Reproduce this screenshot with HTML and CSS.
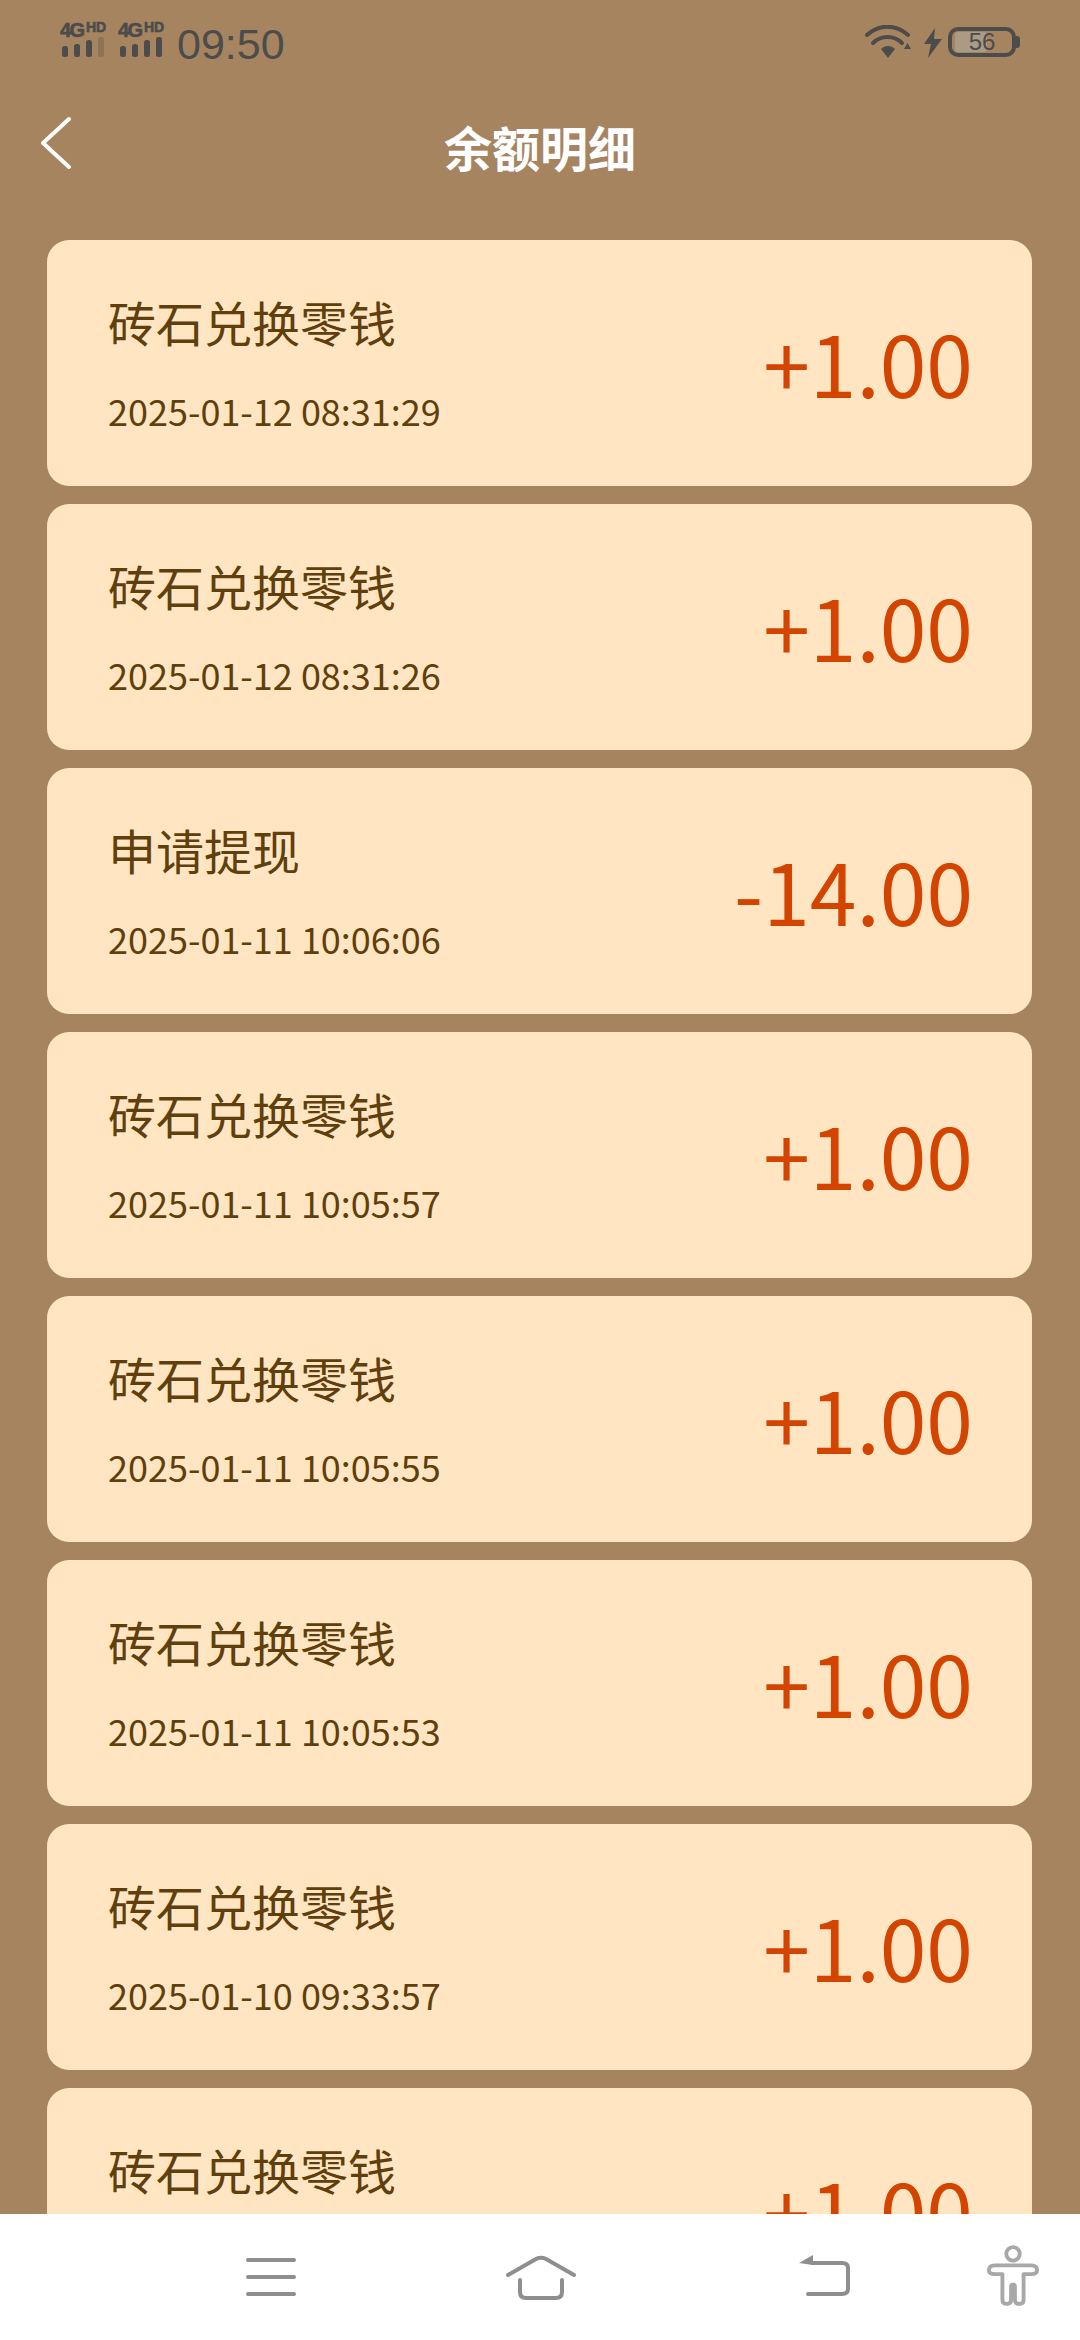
FILE: index.html

```html
<!DOCTYPE html>
<html lang="zh-CN">
<head>
  <meta charset="UTF-8" />
  <title>余额明细</title>
  <link rel="stylesheet" href="styles.css">
</head>
<body>
  <div class="page">
    <div class="status-bar">
      <svg class="signal" width="50" height="48" viewBox="0 0 50 48">
        <text x="0" y="23" class="net">4G</text><text x="26" y="18" class="hd">HD</text>
        <rect x="2" y="32" width="6" height="11" rx="2.500" fill="#4c4c4c"/>
        <rect x="14" y="30" width="6" height="13" rx="2.500" fill="#4c4c4c"/>
        <rect x="26" y="26" width="6" height="17" rx="2.500" fill="#4c4c4c"/>
        <rect x="38" y="23" width="6" height="20" rx="2.500" fill="#8c7355"/>
      </svg>
      <svg class="signal" width="50" height="48" viewBox="0 0 50 48">
        <text x="0" y="23" class="net">4G</text><text x="26" y="18" class="hd">HD</text>
        <rect x="2" y="32" width="6" height="11" rx="2.500" fill="#4c4c4c"/>
        <rect x="14" y="30" width="6" height="13" rx="2.500" fill="#4c4c4c"/>
        <rect x="26" y="26" width="6" height="17" rx="2.500" fill="#4c4c4c"/>
        <rect x="38" y="23" width="6" height="20" rx="2.500" fill="#4c4c4c"/>
      </svg>
      <span class="time">09:50</span>
      <div class="status-right">
        <svg width="48" height="36" viewBox="0 0 48 36" fill="none" stroke="#4c4c4c" stroke-width="4" stroke-linecap="round">
          <path d="M3 10C15 -1 32 -1 44 10"/>
          <path d="M9 18C17 10 30 10 38 18"/>
          <path d="M17 24L24 33L31 24C27 20 21 20 17 24Z" fill="#4c4c4c" stroke="none"/>
          <path d="M40 24L47 24L43.500 18Z" fill="#4c4c4c" stroke="none"/>
        </svg>
        <svg class="bolt" width="18" height="30" viewBox="0 0 18 30"><path d="M11 0L0 16H7L4 30L18 11H10Z" fill="#4c4c4c"/></svg>
        <div class="battery">
          <div class="battery-fill"></div>
          <span class="battery-num">56</span>
        </div>
        <div class="battery-nub"></div>
      </div>
    </div>

    <div class="header">
      <svg class="back" width="32" height="54" viewBox="0 0 32 54" fill="none" stroke="#fff" stroke-width="4" stroke-linecap="round" stroke-linejoin="round">
        <path d="M28 3L2 27L28 51"/>
      </svg>
      <h1>余额明细</h1>
    </div>

    <div class="list">
      <div class="card">
        <div class="info"><div class="name">砖石兑换零钱</div><div class="date">2025-01-12 08:31:29</div></div>
        <div class="amount">+1.00</div>
      </div>
      <div class="card">
        <div class="info"><div class="name">砖石兑换零钱</div><div class="date">2025-01-12 08:31:26</div></div>
        <div class="amount">+1.00</div>
      </div>
      <div class="card">
        <div class="info"><div class="name">申请提现</div><div class="date">2025-01-11 10:06:06</div></div>
        <div class="amount">-14.00</div>
      </div>
      <div class="card">
        <div class="info"><div class="name">砖石兑换零钱</div><div class="date">2025-01-11 10:05:57</div></div>
        <div class="amount">+1.00</div>
      </div>
      <div class="card">
        <div class="info"><div class="name">砖石兑换零钱</div><div class="date">2025-01-11 10:05:55</div></div>
        <div class="amount">+1.00</div>
      </div>
      <div class="card">
        <div class="info"><div class="name">砖石兑换零钱</div><div class="date">2025-01-11 10:05:53</div></div>
        <div class="amount">+1.00</div>
      </div>
      <div class="card">
        <div class="info"><div class="name">砖石兑换零钱</div><div class="date">2025-01-10 09:33:57</div></div>
        <div class="amount">+1.00</div>
      </div>
      <div class="card">
        <div class="info"><div class="name">砖石兑换零钱</div><div class="date">2025-01-10 09:33:55</div></div>
        <div class="amount">+1.00</div>
      </div>
    </div>

    <div class="nav">
      <svg class="nav-menu" width="50" height="40" viewBox="0 0 50 40" fill="none" stroke="#8e8e8e" stroke-width="4" stroke-linecap="round">
        <path d="M2 2H48M2 19H48M2 36H48"/>
      </svg>
      <svg class="nav-home" width="72" height="46" viewBox="0 0 72 46" fill="none" stroke="#8e8e8e" stroke-width="4" stroke-linecap="round" stroke-linejoin="round">
        <path d="M3 20L31 4Q36 1.500 41 4L69 20"/>
        <path d="M15 25V37Q15 43 21 43H51Q57 43 57 37V25"/>
      </svg>
      <svg class="nav-back" width="52" height="42" viewBox="0 0 52 42" fill="none" stroke="#8e8e8e" stroke-width="4" stroke-linecap="round" stroke-linejoin="round">
        <path d="M14 8H44Q50 8 50 13V34Q50 39 44 39H10"/>
        <path d="M15 0L1 8L15 10Z" fill="#8e8e8e" stroke="none"/>
      </svg>
      <svg class="nav-access" width="52" height="62" viewBox="0 0 54 64" fill="none" stroke="#a8a8a8" stroke-width="4" stroke-linejoin="round">
        <circle cx="27" cy="9" r="7"/>
        <path d="M8 21H46Q52 21 52 26Q52 30 46 30H38V57Q38 61 33.500 61Q29 61 29 57V43Q29 41 27 41Q25 41 25 43V57Q25 61 20.500 61Q16 61 16 57V30H8Q2 30 2 26Q2 21 8 21Z"/>
      </svg>
    </div>
  </div>
</body>
</html>
```

FILE: styles.css

```css
* { box-sizing: border-box; }
html, body { margin: 0; padding: 0; }
body { font-family: "Noto Sans CJK SC", "Noto Sans", sans-serif; background: #a6845f; }

.page { width: 1080px; height: 2340px; display: flex; flex-direction: column; overflow: hidden; }

/* status bar */
.status-bar { height: 90px; flex-shrink: 0; display: flex; align-items: flex-start; padding: 14px 60px 0 60px; color: #4c4c4c; }
.signal { margin-right: 8px; }
.net { font: bold 20px "Liberation Sans", sans-serif; letter-spacing: -1.500px; fill: #4c4c4c; stroke: #4c4c4c; stroke-width: 0.600px; }
.hd { font: bold 14px "Liberation Sans", sans-serif; fill: #4c4c4c; stroke: #4c4c4c; stroke-width: 0.600px; }
.time { font: 43px/1 "Liberation Sans", sans-serif; margin-left: 1px; margin-top: 9px; }
.status-right { margin-left: auto; display: flex; align-items: flex-start; margin-top: 11px; }
.bolt { margin: 3px 6px 0 12px; }
.battery { width: 68px; height: 30px; margin-top: 2px; border: 4px solid #4c4c4c; border-radius: 10px; position: relative; display: flex; align-items: center; justify-content: center; }
.battery-fill { position: absolute; left: 3px; top: 1px; bottom: 1px; width: 32px; border-radius: 3px; background: #ab9a85; }
.battery-num { position: relative; font: 24px/1 "Liberation Sans", sans-serif; }
.battery-nub { width: 4px; height: 12px; margin-top: 11px; background: #4c4c4c; border-radius: 0 3px 3px 0; }

/* title bar */
.header { height: 150px; flex-shrink: 0; display: flex; align-items: center; position: relative; }
.back { position: absolute; left: 41px; top: 26px; }
.header h1 { flex: 1; margin: 0; text-align: center; font-size: 48px; font-weight: 700; color: #fff; position: relative; top: -19px; }

/* records */
.list { flex: 1; min-height: 0; overflow: hidden; padding: 0 48px 0 47px; display: flex; flex-direction: column; gap: 18px; }
.card { height: 246px; flex-shrink: 0; background: #ffe5c2; border-radius: 22px; display: flex; justify-content: space-between; align-items: center; padding: 0 59px 0 61px; }
.info { margin-top: -3px; }
.name { font-size: 48px; line-height: 66px; color: #5f3f0c; }
.date { font-size: 36px; line-height: 50px; margin-top: 31px; color: #5f3f0c; }
.amount { font-size: 84px; line-height: 1; color: #d24400; margin-top: -2px; }

/* bottom navigation */
.nav { height: 126px; flex-shrink: 0; background: #fff; display: flex; align-items: flex-start; padding-left: 246px; }
.nav-menu { margin-top: 44px; }
.nav-home { margin-top: 41px; margin-left: 209px; }
.nav-back { margin-top: 41px; margin-left: 221px; }
.nav-access { margin-top: 31px; margin-left: 137px; }
```
